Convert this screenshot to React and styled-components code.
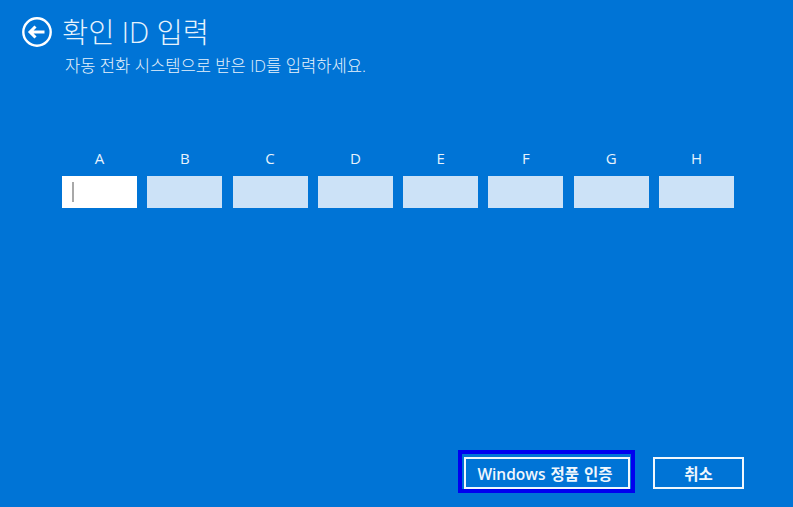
import React from "react";
import styled, { createGlobalStyle } from "styled-components";

const Global = createGlobalStyle`
  html, body { margin: 0; padding: 0; background: #0074d6; }
  body { font-family: "Open Sans", "Noto Sans CJK KR", sans-serif; color: #fff; }
`;

const Page = styled.div`
  width: 793px;
  height: 507px;
  background: #0074d6;
  display: flex;
  flex-direction: column;
  box-sizing: border-box;
  overflow: hidden;
`;

const Header = styled.header`
  display: flex;
  align-items: center;
  gap: 10px;
  padding: 12px 0 0 22px;
  height: 40px;
`;

const BackIcon = styled.svg`
  width: 30px;
  height: 30px;
  flex: none;
`;

const Title = styled.h1`
  margin: 0;
  font-size: 28.5px;
  font-weight: 300;
  line-height: 36px;
  color: #e6f2fc;
`;

const Subtitle = styled.p`
  margin: 4px 0 0 65px;
  font-size: 16.6px;
  font-weight: 300;
  line-height: 20px;
  color: #e6f2fc;
`;

const Fields = styled.div`
  display: grid;
  grid-template-columns: repeat(8, 75px);
  column-gap: 10.3px;
  margin: 72px 0 0 62px;
`;

const Field = styled.div`
  display: flex;
  flex-direction: column;
  align-items: center;
  gap: 8px;
`;

const Label = styled.label`
  font-size: 15px;
  line-height: 20px;
  color: #e6f2fc;
`;

const Box = styled.div`
  width: 75px;
  height: 32px;
  box-sizing: border-box;
  background: ${(p) => (p.$active ? "#ffffff" : "#cce2f7")};
  display: flex;
  align-items: center;
  padding-left: 10px;
`;

const Caret = styled.span`
  width: 1.5px;
  height: 20px;
  background: #a8a8a8;
`;

const Footer = styled.footer`
  margin-top: auto;
  display: flex;
  justify-content: flex-end;
  align-items: flex-end;
  gap: 18px;
  padding: 0 49px 14px 0;
`;

const PrimaryFrame = styled.div`
  border: 4px solid #0000f0;
  padding: 3px 1px 0 2px;
  display: flex;
`;

const CancelSlot = styled.div`
  display: flex;
  padding-bottom: 4px;
`;

const Button = styled.button`
  width: ${(p) => p.$w}px;
  height: 32px;
  box-sizing: border-box;
  background: transparent;
  border: 2px solid #f0f7fd;
  color: #f0f7fd;
  font-family: inherit;
  font-size: 15.5px;
  font-weight: 600;
  word-spacing: 1px;
  padding: 0 ${(p) => p.$shift || 0}px 0 0;
`;

const labels = ["A", "B", "C", "D", "E", "F", "G", "H"];

export default function App() {
  return (
    <Page>
      <Global />
      <Header>
        <BackIcon viewBox="0 0 30 30" fill="none" stroke="#fff">
          <circle cx="15" cy="15" r="13.7" strokeWidth="2.4" />
          <path d="M22.5 15H8.5M13.5 9.5L8 15l5.5 5.5" strokeWidth="3" />
        </BackIcon>
        <Title>확인 ID 입력</Title>
      </Header>
      <Subtitle>자동 전화 시스템으로 받은 ID를 입력하세요.</Subtitle>
      <Fields>
        {labels.map((l, i) => (
          <Field key={l}>
            <Label>{l}</Label>
            <Box $active={i === 0}>{i === 0 && <Caret />}</Box>
          </Field>
        ))}
      </Fields>
      <Footer>
        <PrimaryFrame>
          <Button $w={166} $shift={4}>Windows 정품 인증</Button>
        </PrimaryFrame>
        <CancelSlot>
          <Button $w={91}>취소</Button>
        </CancelSlot>
      </Footer>
    </Page>
  );
}
